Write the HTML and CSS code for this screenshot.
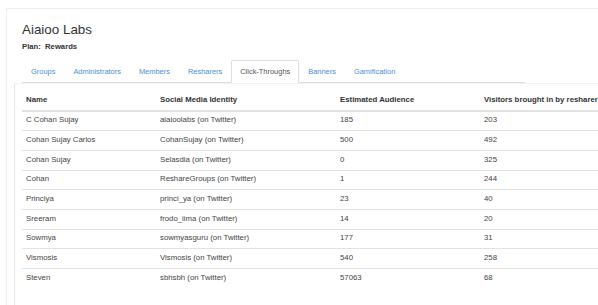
FILE: index.html
```html
<!DOCTYPE html>
<html>
<head>
<meta charset="utf-8">
<link rel="stylesheet" href="styles.css">
</head>
<body>
<div class="card">
  <div class="header">
    <h3 class="title">Aiaioo Labs</h3>
    <div class="plan">Plan:&nbsp; Rewards</div>
  </div>
  <ul class="tabs">
    <li class="tab"><a href="#">Groups</a></li>
    <li class="tab"><a href="#">Administrators</a></li>
    <li class="tab"><a href="#">Members</a></li>
    <li class="tab"><a href="#">Resharers</a></li>
    <li class="tab active"><a href="#">Click-Throughs</a></li>
    <li class="tab"><a href="#">Banners</a></li>
    <li class="tab"><a href="#">Gamification</a></li>
  </ul>
  <div class="panel">
    <table class="grid">
      <colgroup>
        <col class="c1"><col class="c2"><col class="c3"><col class="c4">
      </colgroup>
      <thead>
        <tr><th>Name</th><th>Social Media Identity</th><th>Estimated Audience</th><th>Visitors brought in by resharer</th></tr>
      </thead>
      <tbody>
        <tr><td>C Cohan Sujay</td><td>aiaioolabs (on Twitter)</td><td>185</td><td>203</td></tr>
        <tr><td>Cohan Sujay Carlos</td><td>CohanSujay (on Twitter)</td><td>500</td><td>492</td></tr>
        <tr><td>Cohan Sujay</td><td>Selasdia (on Twitter)</td><td>0</td><td>325</td></tr>
        <tr><td>Cohan</td><td>ReshareGroups (on Twitter)</td><td>1</td><td>244</td></tr>
        <tr><td>Princiya</td><td>princi_ya (on Twitter)</td><td>23</td><td>40</td></tr>
        <tr><td>Sreeram</td><td>frodo_iima (on Twitter)</td><td>14</td><td>20</td></tr>
        <tr><td>Sowmya</td><td>sowmyasguru (on Twitter)</td><td>177</td><td>31</td></tr>
        <tr><td>Vismosis</td><td>Vismosis (on Twitter)</td><td>540</td><td>258</td></tr>
        <tr><td>Steven</td><td>sbhsbh (on Twitter)</td><td>57063</td><td>68</td></tr>
      </tbody>
    </table>
  </div>
</div>
</body>
</html>
```
FILE: styles.css
```css
html, body {
  margin: 0;
  padding: 0;
  background: #fff;
  overflow: hidden;
  font-family: "Liberation Sans", Arial, sans-serif;
  color: #333;
}
.card {
  margin: 8px 0 0 6px;
  border-top: 1px solid #eeeeee;
  border-left: 1px solid #eeeeee;
  padding: 13px 0 0 7px;
  width: 584px;
  overflow: hidden;
}
.header {
  margin-left: 8px;
}
.title {
  margin: 0;
  font-size: 13.4px;
  line-height: 15px;
  font-weight: normal;
  color: #333;
}
.plan {
  margin-top: 4px;
  font-size: 7.7px;
  line-height: 11px;
  font-weight: bold;
  color: #333;
}
.tabs {
  list-style: none;
  margin: 8px 0 0 8px;
  padding: 0;
  width: 503px;
  display: flex;
  border-bottom: 1px solid #dddddd;
}
.tab {
  margin-bottom: -1px;
}
.tab a {
  display: block;
  padding: 5px 8px;
  border: 1px solid transparent;
  border-radius: 2px 2px 0 0;
  font-size: 7.45px;
  line-height: 11px;
  color: #4a8fd6;
  text-decoration: none;
}
.tab.active a {
  color: #555;
  background: #fff;
  border-color: #dddddd #dddddd transparent;
}
.panel {
  border-top: 1px solid #f2f2f2;
  border-left: 1px solid #e6e6e6;
  padding: 7px 0 0 7px;
  height: 214px;
}
.grid {
  border-collapse: collapse;
  table-layout: fixed;
  width: 640px;
  font-size: 7.8px;
}
.c1 { width: 134px; }
.c2 { width: 180px; }
.c3 { width: 144px; }
.grid th {
  text-align: left;
  font-weight: bold;
  color: #333;
  padding: 4px 4px;
  line-height: 10.6px;
  border-bottom: 2px solid #e2e2e2;
}
.grid td {
  padding: 3.6px 4px 4.4px;
  line-height: 10.7px;
  color: #444;
  border-top: 1px solid #e2e2e2;
}
.grid tbody tr:first-child td {
  border-top: none;
}
```
